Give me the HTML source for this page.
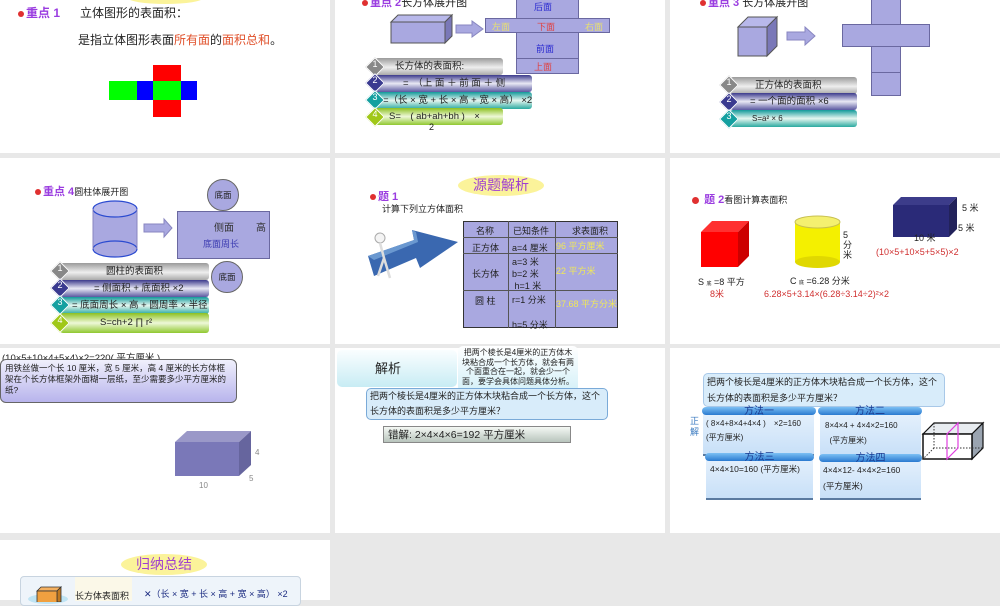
<!DOCTYPE html>
<html><head><meta charset="utf-8"><style>
*{margin:0;padding:0;box-sizing:border-box}
body{width:1000px;height:600px;background:#e8e8e8;position:relative;overflow:hidden;font-family:"Liberation Sans","Noto Sans CJK SC",sans-serif;color:#222}
.s{position:absolute;background:#fff;overflow:hidden}
.a{position:absolute;white-space:nowrap}
.bar{position:absolute;border-radius:3px;font-size:9.5px;padding-left:8px;line-height:17px;white-space:nowrap;color:#222}
.g1{background:linear-gradient(#9a9a9a,#eee 55%,#aaa)}
.g2{background:linear-gradient(#3c3a8c,#e8e8f4 50%,#5a58a0)}
.g3{background:linear-gradient(#139a9a,#e6f6f0 50%,#2aaaa0)}
.g4{background:linear-gradient(#8cc020,#eef8d8 50%,#90c830)}
.dm{position:absolute;width:14px;height:14px;transform:rotate(45deg);border:1px solid #fff}
.dn{position:absolute;color:#fff;font-size:9px;width:20px;text-align:center}
.red{color:#e0502a}
.pur{color:#9a3ce0;font-weight:bold}
.dot{display:inline-block;width:6px;height:6px;border-radius:50%;background:#e03030;margin-right:2px;vertical-align:middle}
.ell{position:absolute;background:#fbf39a;border-radius:50%;color:#a040d0;text-align:center}
.pl{position:absolute;background:#a9a8e0;border:1px solid #6a68a0}
.td{position:absolute;font-size:9px;white-space:nowrap}
.pill{position:absolute;height:8px;border-radius:4px;background:linear-gradient(#7cc0f4,#2a7ad0);font-size:10px;color:#1a3a90;text-align:center;line-height:9px}
.mb{position:absolute;background:linear-gradient(#e4f0fc,#c8e0f8);border-bottom:2px solid #5a7aa0;font-size:9px;padding:5px 6px;line-height:16px;white-space:nowrap;overflow:hidden}
</style></head><body>

<!-- Slide 1 -->
<div class="s" style="left:0;top:0;width:330px;height:153px"></div>
<div class="ell" style="left:128px;top:-8px;width:75px;height:12px"></div>
<div class="a" style="left:18px;top:4px;font-size:12px"><span class="dot"></span><span class="pur">重点 1</span></div>
<div class="a" style="left:80px;top:4px;font-size:12px">立体图形的表面积：</div>
<div class="a" style="left:78px;top:31px;font-size:12px">是指立体图形表面<span class="red">所有面</span>的<span class="red">面积总和</span>。</div>
<div class="a" style="left:153px;top:65px;width:28px;height:17px;background:#f00"></div>
<div class="a" style="left:109px;top:81px;width:28px;height:19px;background:#0f0"></div>
<div class="a" style="left:137px;top:81px;width:16px;height:19px;background:#00f"></div>
<div class="a" style="left:153px;top:81px;width:28px;height:19px;background:#0f0"></div>
<div class="a" style="left:181px;top:81px;width:16px;height:19px;background:#00f"></div>
<div class="a" style="left:153px;top:100px;width:28px;height:17px;background:#f00"></div>

<!-- Slide 2 -->
<div class="s" style="left:335px;top:0;width:330px;height:153px"></div>
<div class="a" style="left:362px;top:-6px;font-size:11px"><span class="dot"></span><span class="pur">重点 2</span>长方体展开图</div>
<svg class="a" style="left:388px;top:12px" width="100" height="34"><polygon points="3,10 10,3 64,3 57,10" fill="#b8b8ea" stroke="#555"/><polygon points="57,10 64,3 64,24 57,31" fill="#7a78b8" stroke="#555"/><rect x="3" y="10" width="54" height="21" fill="#a9a8e0" stroke="#555"/><polygon points="68,13 84,13 84,9 95,17 84,25 84,21 68,21" fill="#a9a8e0" stroke="#8886c0"/></svg>
<div class="pl" style="left:516px;top:-2px;width:63px;height:76px"></div>
<div class="pl" style="left:485px;top:18px;width:125px;height:15px"></div>
<div class="a" style="left:516px;top:58px;width:63px;height:1px;background:#6a68a0"></div>
<div class="a" style="left:534px;top:0px;font-size:9px;color:#2a2ad0">后面</div>
<div class="a" style="left:492px;top:20px;font-size:9px;color:#e8e070">左面</div>
<div class="a" style="left:537px;top:20px;font-size:9px;color:#e04040">下面</div>
<div class="a" style="left:585px;top:20px;font-size:9px;color:#e8e070">右面</div>
<div class="a" style="left:536px;top:42px;font-size:9px;color:#2a2ad0">前面</div>
<div class="a" style="left:534px;top:60px;font-size:9px;color:#e04040">上面</div>
<div class="bar g1" style="left:375px;top:58px;width:128px;padding-left:20px">长方体的表面积:</div>
<div class="bar g2" style="left:375px;top:75px;width:157px;padding-left:28px">=　（上 面 ＋ 前 面 ＋ 侧</div>
<div class="bar g3" style="left:375px;top:92px;width:157px;padding-left:8px">=（长 × 宽 + 长 × 高 + 宽 × 高） ×2</div>
<div class="bar g4" style="left:375px;top:108px;width:128px;padding-left:14px">S=　( ab+ah+bh )　×</div>
<div class="a" style="left:429px;top:122px;font-size:9px">2</div>
<div class="dm" style="left:368px;top:60px;background:#888"></div><div class="dn" style="left:365px;top:59px">1</div>
<div class="dm" style="left:368px;top:76px;background:#3a3a90"></div><div class="dn" style="left:365px;top:75px">2</div>
<div class="dm" style="left:368px;top:93px;background:#14a0a0"></div><div class="dn" style="left:365px;top:92px">3</div>
<div class="dm" style="left:368px;top:110px;background:#a0c818"></div><div class="dn" style="left:365px;top:109px">4</div>

<!-- Slide 3 -->
<div class="s" style="left:670px;top:0;width:330px;height:153px"></div>
<div class="a" style="left:700px;top:-6px;font-size:11px"><span class="dot"></span><span class="pur">重点 3</span> 长方体展开图</div>
<svg class="a" style="left:736px;top:15px" width="100" height="45"><polygon points="2,12 12,2 41,2 31,12" fill="#b8b8ea" stroke="#555"/><polygon points="31,12 41,2 41,31 31,41" fill="#7a78b8" stroke="#555"/><rect x="2" y="12" width="29" height="29" fill="#a9a8e0" stroke="#555"/><polygon points="51,17 69,17 69,12 79,21 69,30 69,25 51,25" fill="#a9a8e0" stroke="#8886c0"/></svg>
<div class="pl" style="left:871px;top:-2px;width:30px;height:98px"></div>
<div class="pl" style="left:842px;top:24px;width:88px;height:23px"></div>
<div class="a" style="left:871px;top:72px;width:30px;height:1px;background:#6a68a0"></div>
<div class="bar g1" style="left:730px;top:77px;width:127px;padding-left:25px">正方体的表面积</div>
<div class="bar g2" style="left:730px;top:93px;width:127px;padding-left:20px">= 一个面的面积 ×6</div>
<div class="bar g3" style="left:730px;top:110px;width:127px;padding-left:22px;font-size:8px">S=a² × 6</div>
<div class="dm" style="left:722px;top:78px;background:#888"></div><div class="dn" style="left:719px;top:77px">1</div>
<div class="dm" style="left:722px;top:95px;background:#3a3a90"></div><div class="dn" style="left:719px;top:94px">2</div>
<div class="dm" style="left:722px;top:112px;background:#14a0a0"></div><div class="dn" style="left:719px;top:111px">3</div>

<!-- Slide 4 -->
<div class="s" style="left:0;top:158px;width:330px;height:186px"></div>
<div class="a" style="left:35px;top:183px;font-size:11px"><span class="dot"></span><span class="pur">重点 4</span><span style="font-size:9px">圆柱体展开图</span></div>
<svg class="a" style="left:90px;top:200px" width="90" height="62"><rect x="3" y="9" width="44" height="40" fill="#a9a8e0"/><ellipse cx="25" cy="49" rx="22" ry="8" fill="#a9a8e0" stroke="#2a4ad0" stroke-width="1.2"/><ellipse cx="25" cy="9" rx="22" ry="8" fill="#b8b8ea" stroke="#2a4ad0" stroke-width="1.2"/><line x1="3" y1="9" x2="3" y2="49" stroke="#8886c0"/><line x1="47" y1="9" x2="47" y2="49" stroke="#8886c0"/><polygon points="54,24 74,24 74,19 82,28 74,37 74,32 54,32" fill="#a9a8e0" stroke="#8886c0"/></svg>
<div class="pl" style="left:177px;top:211px;width:93px;height:48px"></div>
<div class="a" style="left:214px;top:219px;font-size:10px;color:#333">侧面</div>
<div class="a" style="left:256px;top:219px;font-size:10px;color:#333">高</div>
<div class="a" style="left:203px;top:237px;font-size:9px;color:#3a3ab0">底面周长</div>
<div class="a" style="left:207px;top:179px;width:32px;height:32px;border-radius:50%;background:#a9a8e0;border:1px solid #666;font-size:8.5px;text-align:center;line-height:30px">底面</div>
<div class="a" style="left:211px;top:261px;width:32px;height:32px;border-radius:50%;background:#a9a8e0;border:1px solid #666;font-size:8.5px;text-align:center;line-height:30px">底面</div>
<div class="bar g1" style="left:60px;top:263px;width:149px;padding-left:46px">圆柱的表面积</div>
<div class="bar g2" style="left:60px;top:280px;width:149px;padding-left:34px">= 侧面积 + 底面积 ×2</div>
<div class="bar g3" style="left:60px;top:297px;width:149px;padding-left:12px">= 底面周长 × 高 + 圆周率 × 半径</div>
<div class="bar g4" style="left:60px;top:313px;width:149px;padding-left:40px;height:20px;line-height:20px">S=ch+2 ∏ r²</div>
<div class="dm" style="left:53px;top:264px;background:#888"></div><div class="dn" style="left:50px;top:263px">1</div>
<div class="dm" style="left:53px;top:281px;background:#3a3a90"></div><div class="dn" style="left:50px;top:280px">2</div>
<div class="dm" style="left:53px;top:298px;background:#14a0a0"></div><div class="dn" style="left:50px;top:297px">3</div>
<div class="dm" style="left:53px;top:316px;background:#a0c818"></div><div class="dn" style="left:50px;top:315px">4</div>

<!-- Slide 5 -->
<div class="s" style="left:335px;top:158px;width:330px;height:186px"></div>
<div class="ell" style="left:458px;top:175px;width:86px;height:21px;font-size:14px;line-height:21px">源题解析</div>
<div class="a" style="left:370px;top:188px;font-size:11px"><span class="dot"></span><span class="pur">题 1</span></div>
<div class="a" style="left:382px;top:202px;font-size:9px">计算下列立方体面积</div>
<svg class="a" style="left:364px;top:228px" width="100" height="60"><polygon points="4,28 50,12 48,2 94,14 56,40 52,30 10,48" fill="#3a68b0"/><polygon points="4,28 50,12 48,2 52,4 54,14 10,32" fill="#6a98d0"/><circle cx="16" cy="10" r="5" fill="#f4f4f4" stroke="#aaa"/><path d="M16,15 L20,30 L14,48 M20,30 L26,50" stroke="#ddd" stroke-width="2.5" fill="none"/></svg>
<div class="a" style="left:463px;top:221px;width:155px;height:107px;background:#a9a8e0;border:1.5px solid #333"></div>
<div class="a" style="left:508px;top:221px;width:1px;height:107px;background:#555"></div>
<div class="a" style="left:555px;top:221px;width:1px;height:107px;background:#555"></div>
<div class="a" style="left:463px;top:237px;width:155px;height:1px;background:#555"></div>
<div class="a" style="left:463px;top:253px;width:155px;height:1px;background:#555"></div>
<div class="a" style="left:463px;top:290px;width:155px;height:1px;background:#555"></div>
<div class="td" style="left:476px;top:224px">名称</div><div class="td" style="left:513px;top:224px">已知条件</div><div class="td" style="left:572px;top:224px">求表面积</div>
<div class="td" style="left:472px;top:241px">正方体</div><div class="td" style="left:512px;top:241px">a=4 厘米</div><div class="td" style="left:556px;top:239px;color:#f0e858">96 平方厘米</div>
<div class="td" style="left:472px;top:267px">长方体</div><div class="td" style="left:512px;top:256px;line-height:12px">a=3 米<br>b=2 米<br>&nbsp;h=1 米</div><div class="td" style="left:556px;top:264px;color:#f0e858">22 平方米</div>
<div class="td" style="left:475px;top:294px">圆 柱</div><div class="td" style="left:512px;top:293px">r=1 分米</div><div class="td" style="left:556px;top:297px;color:#f0e858">37.68 平方分米</div>
<div class="td" style="left:512px;top:318px">h=5 分米</div>

<!-- Slide 6 -->
<div class="s" style="left:670px;top:158px;width:330px;height:186px"></div>
<div class="a" style="left:692px;top:191px;font-size:11px"><span class="dot" style="width:7px;height:7px"></span> <span class="pur">题 2</span><span style="font-size:9px">看图计算表面积</span></div>
<svg class="a" style="left:700px;top:220px" width="52" height="60"><polygon points="1,12 12,1 49,1 38,12" fill="#ff3030"/><polygon points="38,12 49,1 49,36 38,47" fill="#c00"/><rect x="1" y="12" width="37" height="35" fill="#f00"/></svg>
<div class="a" style="left:698px;top:275px;font-size:9px">S <span style="font-size:5px">底</span> =8 平方</div>
<div class="a" style="left:710px;top:287px;font-size:9px;color:#d03030">8米</div>
<svg class="a" style="left:793px;top:214px" width="50" height="58"><rect x="2" y="8" width="45" height="40" fill="#f4f000"/><ellipse cx="24.5" cy="48" rx="22.5" ry="6" fill="#e0d800"/><ellipse cx="24.5" cy="8" rx="22.5" ry="6" fill="#f4f070" stroke="#c8c050"/></svg>
<div class="a" style="left:843px;top:230px;font-size:9px;line-height:10px">5<br>分<br>米</div>
<div class="a" style="left:790px;top:274px;font-size:9px">C <span style="font-size:5px">底</span> =6.28 分米</div>
<div class="a" style="left:764px;top:289px;font-size:9px;color:#d03030">6.28×5+3.14×(6.28÷3.14÷2)²×2</div>
<svg class="a" style="left:892px;top:196px" width="66" height="44"><polygon points="1,9 9,1 65,1 57,9" fill="#3c3c8a"/><polygon points="57,9 65,1 65,33 57,41" fill="#22225a"/><rect x="1" y="9" width="56" height="32" fill="#2a2a78"/></svg>
<div class="a" style="left:962px;top:201px;font-size:9px">5 米</div>
<div class="a" style="left:958px;top:221px;font-size:9px">5 米</div>
<div class="a" style="left:914px;top:231px;font-size:9px">10 米</div>
<div class="a" style="left:876px;top:247px;font-size:9px;color:#d03030">(10×5+10×5+5×5)×2</div>

<!-- Slide 7 -->
<div class="s" style="left:0;top:348px;width:330px;height:185px"></div>
<div class="a" style="left:2px;top:350px;font-size:9.5px">(10×5+10×4+5×4)×2=220( 平方厘米 )</div>
<div class="a" style="left:0;top:359px;width:237px;height:44px;border-radius:6px;background:linear-gradient(#f0f0fc,#b8b4ec);border:1px solid #666;font-size:8.5px;padding:3px 4px;line-height:11px;white-space:normal">用铁丝做一个长 10 厘米，宽 5 厘米，高 4 厘米的长方体框架在个长方体框架外面糊一层纸，至少需要多少平方厘米的纸?</div>
<svg class="a" style="left:174px;top:430px" width="80" height="50"><polygon points="1,12 13,1 77,1 65,12" fill="#9a98c8"/><polygon points="65,12 77,1 77,35 65,46" fill="#66659e"/><rect x="1" y="12" width="64" height="34" fill="#7a78b8"/></svg>
<div class="a" style="left:255px;top:448px;font-size:8px;color:#888">4</div>
<div class="a" style="left:249px;top:474px;font-size:8px;color:#888">5</div>
<div class="a" style="left:199px;top:481px;font-size:8px;color:#888">10</div>

<!-- Slide 8 -->
<div class="s" style="left:335px;top:348px;width:330px;height:185px"></div>
<div class="a" style="left:337px;top:350px;width:120px;height:37px;border-radius:5px;background:linear-gradient(#fafeff,#c8ecf4);font-size:13px;text-align:center;line-height:37px;padding-right:18px">解析</div>
<div class="a" style="left:458px;top:346px;width:120px;height:46px;border-radius:5px;background:linear-gradient(#fff,#d4f0f8);font-size:8px;line-height:9.5px;padding:2px 3px;white-space:normal;text-align:center">把两个棱长是4厘米的正方体木块粘合成一个长方体，就会有两个面重合在一起，就会少一个面，要学会具体问题具体分析。</div>
<div class="a" style="left:366px;top:388px;width:242px;height:32px;border-radius:5px;background:#d8ecfa;border:1.5px solid #7aaad8;font-size:9px;line-height:15px;padding:0 3px">把两个棱长是4厘米的正方体木块粘合成一个长方体，这个<br>长方体的表面积是多少平方厘米？</div>
<div class="a" style="left:383px;top:426px;width:188px;height:17px;background:linear-gradient(#f4f8f4,#b8c4bc);border:1px solid #888;font-size:10.5px;line-height:16px;padding-left:4px">错解:  2×4×4×6=192 平方厘米</div>

<!-- Slide 9 -->
<div class="s" style="left:670px;top:348px;width:330px;height:185px"></div>
<div class="a" style="left:703px;top:373px;width:242px;height:34px;border-radius:5px;background:#d8ecfa;border:1.5px solid #a8c8e8;font-size:9px;line-height:16px;padding:0 3px">把两个棱长是4厘米的正方体木块粘合成一个长方体，这个<br>长方体的表面积是多少平方厘米？</div>
<div class="a" style="left:690px;top:416px;font-size:9px;line-height:11px;color:#3a7ac0">正<br>解</div>
<div class="mb" style="left:703px;top:414px;width:111px;height:42px;padding:3px 3px;font-size:8px;line-height:14px">( 8×4+8×4+4×4 )　×2=160<br>(平方厘米)</div>
<div class="pill" style="left:702px;top:407px;width:114px">方法一</div>
<div class="mb" style="left:820px;top:414px;width:101px;height:43px;font-size:8px;padding:4px 5px;line-height:15px">8×4×4 + 4×4×2=160<br>&nbsp;&nbsp;(平方厘米)</div>
<div class="pill" style="left:818px;top:407px;width:104px">方法二</div>
<div class="mb" style="left:706px;top:458px;width:107px;height:42px;font-size:8.5px;padding:3px 4px">4×4×10=160 (平方厘米)</div>
<div class="pill" style="left:705px;top:453px;width:109px">方法三</div>
<div class="mb" style="left:820px;top:459px;width:101px;height:41px;font-size:8.5px;padding:3px 3px">4×4×12- 4×4×2=160<br>(平方厘米)</div>
<div class="pill" style="left:819px;top:454px;width:103px">方法四</div>
<svg class="a" style="left:920px;top:420px" width="66" height="42"><polygon points="3,14 14,3 63,3 52,14" fill="#e8ecf0" stroke="#111" stroke-width="1.2"/><polygon points="52,14 63,3 63,28 52,39" fill="#9aa4b0" stroke="#111" stroke-width="1.2"/><rect x="3" y="14" width="49" height="25" fill="#fff" stroke="#111" stroke-width="1.5"/><path d="M14,3 L14,28 L63,28 M14,28 L3,39" stroke="#333" stroke-dasharray="1.5,1.5" fill="none"/><path d="M27,14 L38,3 L38,28 L27,39 Z M27,14 L27,39" stroke="#e040e0" stroke-width="1.2" fill="none"/></svg>

<!-- Slide 10 -->
<div class="s" style="left:0;top:540px;width:330px;height:60px"></div>
<div class="ell" style="left:121px;top:554px;width:86px;height:21px;font-size:14px;line-height:21px">归纳总结</div>
<div class="a" style="left:20px;top:576px;width:281px;height:30px;border-radius:4px;background:#eef4fa;border:1px solid #c8d4e0"></div>
<div class="a" style="left:75px;top:577px;width:57px;height:24px;background:#fbf8e8"></div>
<div class="a" style="left:75px;top:589px;font-size:9px">长方体表面积</div>
<div class="a" style="left:144px;top:587px;font-size:9px;color:#1a2a80">✕（长 × 宽 + 长 × 高 + 宽 × 高） ×2</div>
<div class="a" style="left:28px;top:594px;width:40px;height:10px;border-radius:50%;background:#bfe4f4"></div>
<svg class="a" style="left:36px;top:586px" width="28" height="16"><polygon points="1,5 5,1 25,1 21,5" fill="#f4b060" stroke="#333" stroke-width=".8"/><polygon points="21,5 25,1 25,16 21,16" fill="#c07820" stroke="#333" stroke-width=".8"/><rect x="1" y="5" width="20" height="12" fill="#f0a040" stroke="#333" stroke-width=".8"/></svg>

</body></html>
